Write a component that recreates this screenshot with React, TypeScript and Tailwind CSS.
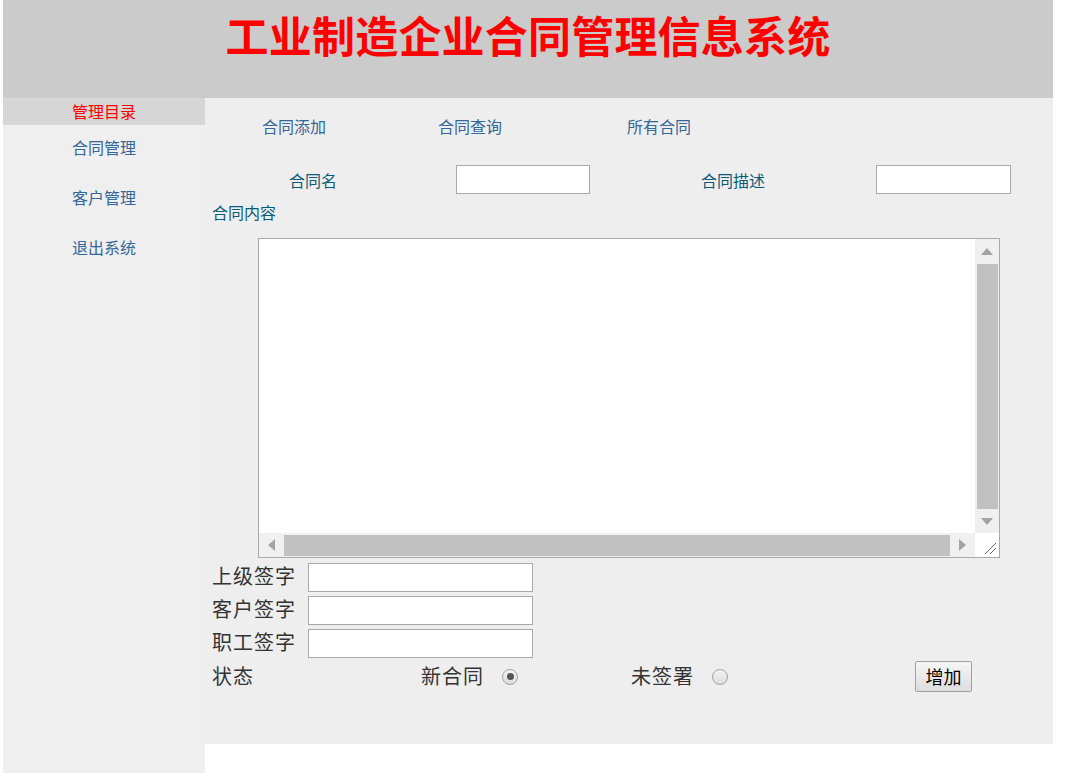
import React from "react";

const sans = { fontFamily: '"Noto Sans CJK SC", "Noto Sans", sans-serif' };
const serif = { fontFamily: '"Liberation Serif", "Noto Sans CJK SC", serif' };

function Radio({ checked }: { checked?: boolean }) {
  return (
    <span className="flex h-[16px] w-[16px] items-center justify-center rounded-full border border-[#a3a3a3] bg-gradient-to-b from-[#f4f4f4] to-[#dcdcdc]">
      {checked && <span className="h-[7px] w-[7px] rounded-full bg-[#555555]" />}
    </span>
  );
}

function FakeTextarea() {
  return (
    <div className="ml-[53px] mt-[16px] grid h-[320px] w-[742px] grid-cols-[1fr_24px] grid-rows-[1fr_24px] border border-[#a9a9a9] bg-white">
      <textarea className="h-full w-full resize-none bg-white outline-none" />
      <div className="flex flex-col items-center bg-[#f0f0f0]">
        <div className="flex h-[25px] items-center justify-center">
          <svg width="12" height="7" viewBox="0 0 12 7">
            <polygon points="6,0 12,7 0,7" fill="#a3a3a3" />
          </svg>
        </div>
        <div className="w-[21px] flex-1 bg-[#c1c1c1]" />
        <div className="flex h-[24px] items-center justify-center">
          <svg width="12" height="7" viewBox="0 0 12 7">
            <polygon points="0,0 12,0 6,7" fill="#a3a3a3" />
          </svg>
        </div>
      </div>
      <div className="flex items-center bg-[#f0f0f0]">
        <div className="flex w-[25px] items-center justify-center">
          <svg width="7" height="12" viewBox="0 0 7 12">
            <polygon points="7,0 7,12 0,6" fill="#a3a3a3" />
          </svg>
        </div>
        <div className="h-[21px] flex-1 bg-[#c1c1c1]" />
        <div className="flex w-[25px] items-center justify-center">
          <svg width="7" height="12" viewBox="0 0 7 12">
            <polygon points="0,0 7,6 0,12" fill="#a3a3a3" />
          </svg>
        </div>
      </div>
      <div className="flex items-end justify-end bg-white p-[2px]">
        <svg width="14" height="14" viewBox="0 0 14 14">
          <line x1="13" y1="2" x2="2" y2="13" stroke="#666" strokeWidth="1" />
          <line x1="13" y1="7" x2="7" y2="13" stroke="#666" strokeWidth="1" />
        </svg>
      </div>
    </div>
  );
}

function SignRow({ label, first }: { label: string; first?: boolean }) {
  return (
    <div className={`flex items-center ${first ? "mt-[5px]" : "mt-[4px]"} pl-[7px]`}>
      <span className="w-[96px] text-[20px] leading-[29px] tracking-[1px] text-[#333333]" style={serif}>
        {label}
      </span>
      <input className="h-[29px] w-[225px] border border-[#a9a9a9] bg-white outline-none" />
    </div>
  );
}

export default function App() {
  return (
    <div className="ml-[3px] w-[1050px]" style={sans}>
      <div className="h-[98px] bg-[#cbcbcb] pt-[13px] text-center">
        <h1 className="text-[43px] font-bold leading-[43px] tracking-[0.2px] text-[#ff0000]">工业制造企业合同管理信息系统</h1>
      </div>
      <div className="flex items-start">
        <div className="h-[675px] w-[202px] bg-[#efefef]">
          <div className="h-[27px] bg-[#d6d6d6] pl-[69px] text-[16px] leading-[27px] text-[#ff0000]">管理目录</div>
          <div className="flex flex-col gap-[30px] pl-[69px] pt-[12px] text-[16px] leading-[20px] text-[#336699]">
            <span>合同管理</span>
            <span>客户管理</span>
            <span>退出系统</span>
          </div>
        </div>
        <div className="h-[646px] w-[848px] bg-[#eeeeee]">
          <div className="mt-[18px] flex pl-[57px] text-[16px] leading-[20px] text-[#336699]">
            <span className="w-[176px]">合同添加</span>
            <span className="w-[189px]">合同查询</span>
            <span>所有合同</span>
          </div>
          <div className="mt-[29px] flex items-center text-[16px] text-[#0a5a78]">
            <span className="ml-[84px] w-[167px]">合同名</span>
            <input className="h-[29px] w-[134px] border border-[#a9a9a9] bg-white outline-none" />
            <span className="ml-[111px] w-[175px]">合同描述</span>
            <input className="h-[29px] w-[135px] border border-[#a9a9a9] bg-white outline-none" />
          </div>
          <div className="mt-[8px] pl-[7px] text-[16px] leading-[20px] text-[#0a5a78]">合同内容</div>
          <FakeTextarea />
          <SignRow label="上级签字" first />
          <SignRow label="客户签字" />
          <SignRow label="职工签字" />
          <div className="mt-[1px] flex h-[35px] items-center pl-[7px] text-[20px] tracking-[1px] text-[#333333]" style={serif}>
            <span className="w-[209px]">状态</span>
            <span className="w-[81px]">新合同</span>
            <Radio checked />
            <span className="ml-[113px] w-[81px]">未签署</span>
            <Radio />
            <button
              className="ml-[187px] h-[31px] w-[57px] rounded-[2px] border border-[#a0a0a0] bg-gradient-to-b from-[#f6f6f6] to-[#dddddd] text-[18px] tracking-normal text-black"
              style={sans}
            >
              增加
            </button>
          </div>
        </div>
      </div>
    </div>
  );
}
